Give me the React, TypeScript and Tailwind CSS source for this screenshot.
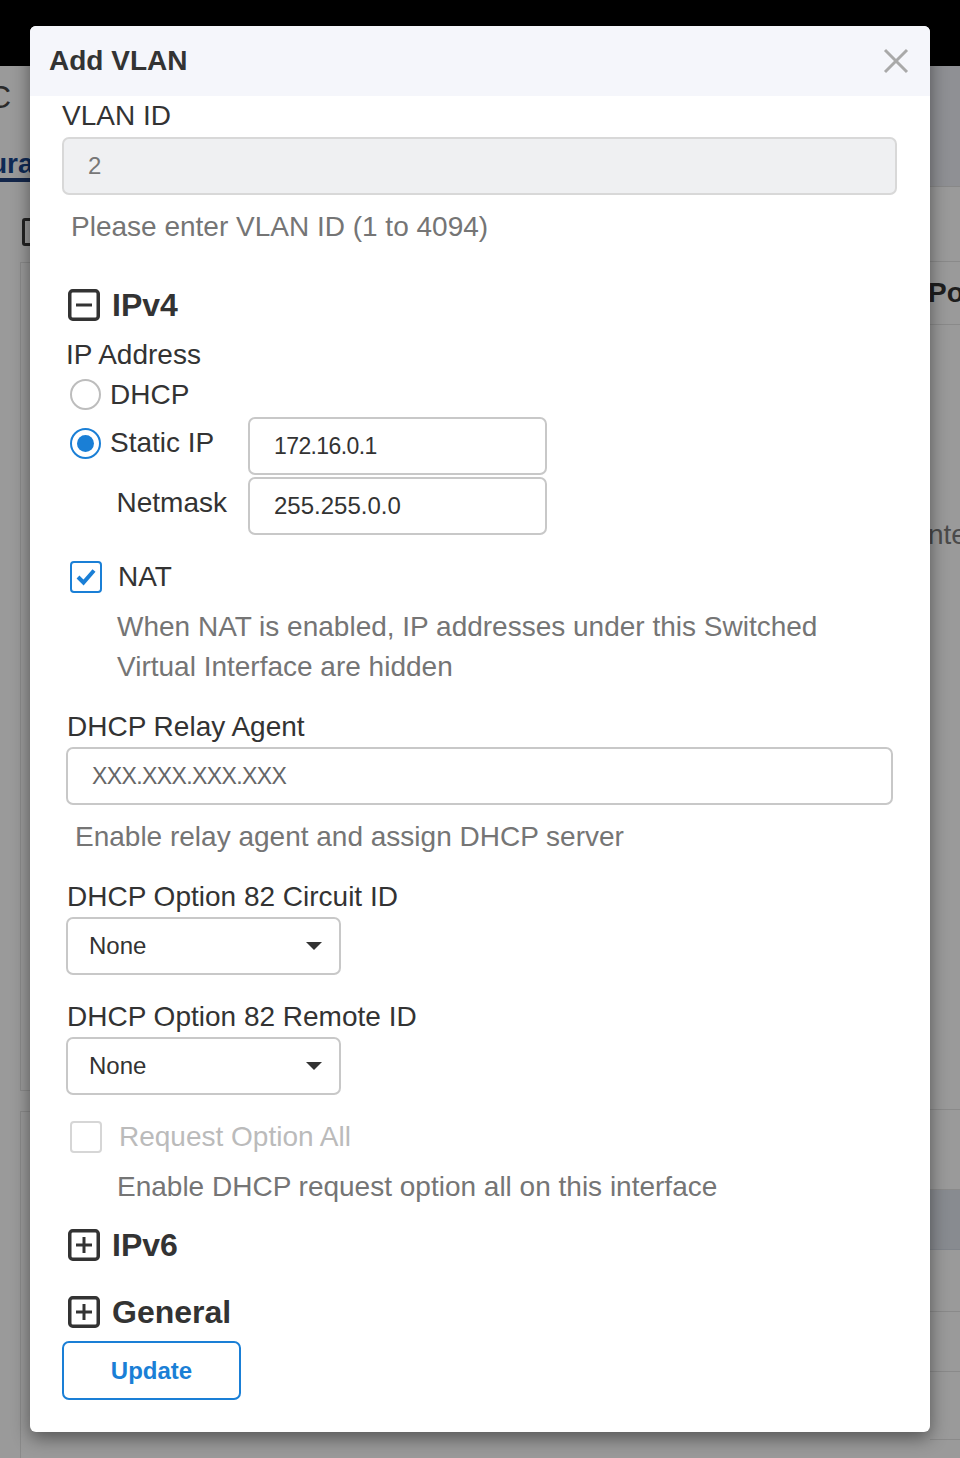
import React from "react";

function BoxIcon({ plus }: { plus?: boolean }) {
  return (
    <svg width="32" height="32" viewBox="0 0 32 32" className="shrink-0">
      <rect x="1.75" y="1.75" width="28.5" height="28.5" rx="3" fill="none" stroke="#333" strokeWidth="3.5" />
      <line x1="8" y1="16" x2="24" y2="16" stroke="#333" strokeWidth="3" />
      {plus && <line x1="16" y1="8" x2="16" y2="24" stroke="#333" strokeWidth="3" />}
    </svg>
  );
}

function Caret() {
  return (
    <svg width="16" height="8" viewBox="0 0 16 8">
      <polygon points="0,0 16,0 8,8" fill="#333" />
    </svg>
  );
}

export default function App() {
  return (
    <div className="relative w-[960px] h-[1458px] overflow-hidden bg-[#9a9a9a] font-['Liberation_Sans',Arial,sans-serif]">
      {/* dimmed page behind */}
      <div className="h-[66px] bg-black" />
      <div className="flex">
        <div className="w-[30px] shrink-0 flex flex-col">
          <div className="h-[121px] flex flex-col">
            <div className="h-[62px] flex items-center -ml-[12px] text-[32px] text-[#2a2a2a]">C</div>
            <div className="h-[50px] flex items-end -ml-[10px] text-[28px] font-bold text-[#0f2a55] leading-none overflow-hidden whitespace-nowrap">ura</div>
            <div className="h-[4px] bg-[#13264a]" />
          </div>
          <div className="h-[31px]" />
          <div className="ml-[22px] w-[28px] h-[28px] border-[3px] border-[#222] rounded-[3px]" />
          <div className="h-[16px]" />
          <div className="ml-[20px] h-[829px] border-l border-t border-b border-[#8a8a8a]" />
          <div className="h-[20px]" />
          <div className="ml-[20px] h-[400px] border-l border-t border-[#8a8a8a]" />
        </div>
        <div className="w-[900px] shrink-0" />
        <div className="w-[30px] shrink-0 flex flex-col">
          <div className="h-[121px] bg-[#8f9094] border-b border-[#888]" />
          <div className="h-[75px] border-b border-[#8a8a8a]" />
          <div className="h-[63px] border-b border-[#8a8a8a] flex items-center -ml-[2px] text-[28px] font-bold text-[#1e1e1e] whitespace-nowrap">Por</div>
          <div className="h-[180px]" />
          <div className="h-[60px] flex items-center -ml-[2px] text-[28px] text-[#4a4a4a] whitespace-nowrap">nte</div>
          <div className="h-[545px] border-b border-[#8a8a8a]" />
          <div className="h-[80px] border-b border-[#8a8a8a]" />
          <div className="h-[60px] bg-[#888b90] border-b border-[#80848a]" />
          <div className="h-[62px] border-b border-[#8a8a8a]" />
          <div className="h-[60px] border-b border-[#8a8a8a]" />
          <div className="h-[68px] border-b border-[#8a8a8a]" />
        </div>
      </div>

      {/* modal */}
      <div className="absolute left-[30px] top-[26px] w-[900px] h-[1406px] bg-white rounded-[6px] shadow-[0_6px_18px_rgba(0,0,0,0.45)] flex flex-col">
        <div className="h-[70px] bg-[#f5f6fb] rounded-t-[6px] flex items-center justify-between pl-[19px] pr-[21px]">
          <div className="text-[28px] font-bold text-[#333]">Add VLAN</div>
          <svg width="26" height="26" viewBox="0 0 26 26">
            <line x1="2" y1="2" x2="24" y2="24" stroke="#a9a9a9" strokeWidth="3" />
            <line x1="24" y1="2" x2="2" y2="24" stroke="#a9a9a9" strokeWidth="3" />
          </svg>
        </div>

        <div className="pl-[32px] pr-[33px] flex flex-col text-[28px] text-[#333]">
          <div className="mt-[4px] h-[32px] leading-[32px]">VLAN ID</div>
          <div className="mt-[5px] h-[58px] bg-[#eff0f2] border-2 border-[#d8d8d8] rounded-[7px] flex items-center pl-[24px] text-[24px] text-[#777]">2</div>
          <div className="mt-[16px] h-[32px] leading-[32px] pl-[9px] text-[#757575]">Please enter VLAN ID (1 to 4094)</div>

          <div className="pl-[4px] pr-[4px] flex flex-col">
            <div className="mt-[44px] h-[36px] flex items-center gap-[12px] pl-[2px]">
              <BoxIcon />
              <span className="text-[32px] font-bold text-[#333]">IPv4</span>
            </div>
            <div className="mt-[16px] h-[32px] leading-[32px]">IP Address</div>
            <div className="mt-[8px] h-[31px] flex items-center">
              <div className="ml-[4px] w-[31px] h-[31px] rounded-full border-2 border-[#bdbdbd] bg-white" />
              <span className="ml-[9px]">DHCP</span>
            </div>
            <div className="mt-[7px] flex">
              <div className="w-[182px] h-[52px] flex items-center">
                <div className="ml-[4px] w-[31px] h-[31px] rounded-full border-2 border-[#1a7fd6] bg-white flex items-center justify-center">
                  <div className="w-[17px] h-[17px] rounded-full bg-[#1a7fd6]" />
                </div>
                <span className="ml-[9px]">Static IP</span>
              </div>
              <div className="w-[299px] h-[58px] border-2 border-[#c8c8c8] rounded-[7px] flex items-center pl-[24px] text-[23px] tracking-[-0.6px] text-[#333]">172.16.0.1</div>
            </div>
            <div className="mt-[2px] flex">
              <div className="w-[182px] h-[58px] flex items-center justify-end pr-[21px] pb-[6px]">Netmask</div>
              <div className="w-[299px] h-[58px] border-2 border-[#c8c8c8] rounded-[7px] flex items-center pl-[24px] text-[24px] text-[#333]">255.255.0.0</div>
            </div>

            <div className="mt-[26px] h-[31px] flex items-center">
              <div className="ml-[4px] w-[32px] h-[32px] rounded-[4px] border-2 border-[#1a7fd6] bg-white flex items-center justify-center">
                <svg width="22" height="22" viewBox="0 0 22 22">
                  <polyline points="3,11 8.5,16.5 19,4.5" fill="none" stroke="#1a7fd6" strokeWidth="4" />
                </svg>
              </div>
              <span className="ml-[16px]">NAT</span>
            </div>
            <div className="mt-[15px] pl-[51px] leading-[40px] text-[#757575]">
              When NAT is enabled, IP addresses under this Switched
              <br />
              Virtual Interface are hidden
            </div>

            <div className="mt-[24px] h-[32px] leading-[32px] pl-[1px]">DHCP Relay Agent</div>
            <div className="mt-[4px] h-[58px] border-2 border-[#c8c8c8] rounded-[7px] flex items-center pl-[24px] text-[23px] tracking-[-0.6px] text-[#666]">XXX.XXX.XXX.XXX</div>
            <div className="mt-[16px] h-[32px] leading-[32px] pl-[9px] text-[#757575]">Enable relay agent and assign DHCP server</div>

            <div className="mt-[28px] h-[32px] leading-[32px] pl-[1px]">DHCP Option 82 Circuit ID</div>
            <div className="mt-[4px] w-[275px] h-[58px] border-2 border-[#c8c8c8] rounded-[7px] flex items-center justify-between pl-[21px] pr-[17px] text-[24px] text-[#333]">
              <span>None</span>
              <Caret />
            </div>

            <div className="mt-[26px] h-[32px] leading-[32px] pl-[1px]">DHCP Option 82 Remote ID</div>
            <div className="mt-[4px] w-[275px] h-[58px] border-2 border-[#c8c8c8] rounded-[7px] flex items-center justify-between pl-[21px] pr-[17px] text-[24px] text-[#333]">
              <span>None</span>
              <Caret />
            </div>

            <div className="mt-[26px] h-[31px] flex items-center">
              <div className="ml-[4px] w-[32px] h-[32px] rounded-[4px] border-2 border-[#d6d6d6] bg-white" />
              <span className="ml-[17px] text-[#bbbbbb]">Request Option All</span>
            </div>
            <div className="mt-[19px] h-[32px] leading-[32px] pl-[51px] text-[#757575]">Enable DHCP request option all on this interface</div>

            <div className="mt-[24px] h-[36px] flex items-center gap-[12px] pl-[2px]">
              <BoxIcon plus />
              <span className="text-[32px] font-bold text-[#333]">IPv6</span>
            </div>
            <div className="mt-[31px] h-[36px] flex items-center gap-[12px] pl-[2px]">
              <BoxIcon plus />
              <span className="text-[32px] font-bold text-[#333]">General</span>
            </div>
          </div>

          <button className="mt-[11px] w-[179px] h-[59px] border-2 border-[#1a7fd6] rounded-[7px] bg-white text-[24px] font-bold text-[#1a7fd6]">Update</button>
        </div>
      </div>
    </div>
  );
}
